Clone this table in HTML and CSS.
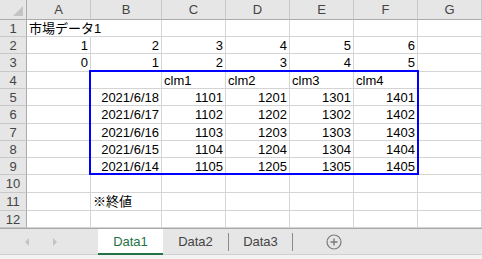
FILE: index.html
```html
<!DOCTYPE html>
<html>
<head>
    <meta charset="UTF-8">
    <title>市場データ</title>
    <link rel="stylesheet" href="styles.css">
</head>
<body>
    <div class="sheet">
        <div class="grid">
            <!-- column headers -->
            <div class="cell head corner"><span class="tri"></span></div>
            <div class="cell head">A</div>
            <div class="cell head">B</div>
            <div class="cell head">C</div>
            <div class="cell head">D</div>
            <div class="cell head">E</div>
            <div class="cell head">F</div>
            <div class="cell head">G</div>

            <!-- row 1 -->
            <div class="cell rowhead">1</div>
            <div class="cell text overflow">市場データ1</div>
            <div class="cell"></div><div class="cell"></div><div class="cell"></div>
            <div class="cell"></div><div class="cell"></div><div class="cell"></div>

            <!-- row 2 -->
            <div class="cell rowhead">2</div>
            <div class="cell num">1</div>
            <div class="cell num">2</div>
            <div class="cell num">3</div>
            <div class="cell num">4</div>
            <div class="cell num">5</div>
            <div class="cell num">6</div>
            <div class="cell"></div>

            <!-- row 3 -->
            <div class="cell rowhead">3</div>
            <div class="cell num">0</div>
            <div class="cell num">1</div>
            <div class="cell num">2</div>
            <div class="cell num">3</div>
            <div class="cell num">4</div>
            <div class="cell num">5</div>
            <div class="cell"></div>

            <!-- row 4 -->
            <div class="cell rowhead">4</div>
            <div class="cell"></div>
            <div class="cell"></div>
            <div class="cell text">clm1</div>
            <div class="cell text">clm2</div>
            <div class="cell text">clm3</div>
            <div class="cell text">clm4</div>
            <div class="cell"></div>

            <!-- row 5 -->
            <div class="cell rowhead">5</div>
            <div class="cell"></div>
            <div class="cell num">2021/6/18</div>
            <div class="cell num">1101</div>
            <div class="cell num">1201</div>
            <div class="cell num">1301</div>
            <div class="cell num">1401</div>
            <div class="cell"></div>

            <!-- row 6 -->
            <div class="cell rowhead">6</div>
            <div class="cell"></div>
            <div class="cell num">2021/6/17</div>
            <div class="cell num">1102</div>
            <div class="cell num">1202</div>
            <div class="cell num">1302</div>
            <div class="cell num">1402</div>
            <div class="cell"></div>

            <!-- row 7 -->
            <div class="cell rowhead">7</div>
            <div class="cell"></div>
            <div class="cell num">2021/6/16</div>
            <div class="cell num">1103</div>
            <div class="cell num">1203</div>
            <div class="cell num">1303</div>
            <div class="cell num">1403</div>
            <div class="cell"></div>

            <!-- row 8 -->
            <div class="cell rowhead">8</div>
            <div class="cell"></div>
            <div class="cell num">2021/6/15</div>
            <div class="cell num">1104</div>
            <div class="cell num">1204</div>
            <div class="cell num">1304</div>
            <div class="cell num">1404</div>
            <div class="cell"></div>

            <!-- row 9 -->
            <div class="cell rowhead">9</div>
            <div class="cell"></div>
            <div class="cell num">2021/6/14</div>
            <div class="cell num">1105</div>
            <div class="cell num">1205</div>
            <div class="cell num">1305</div>
            <div class="cell num">1405</div>
            <div class="cell"></div>

            <!-- row 10 -->
            <div class="cell rowhead">10</div>
            <div class="cell"></div><div class="cell"></div><div class="cell"></div><div class="cell"></div>
            <div class="cell"></div><div class="cell"></div><div class="cell"></div>

            <!-- row 11 -->
            <div class="cell rowhead">11</div>
            <div class="cell"></div>
            <div class="cell text">※終値</div>
            <div class="cell"></div><div class="cell"></div>
            <div class="cell"></div><div class="cell"></div><div class="cell"></div>

            <!-- row 12 -->
            <div class="cell rowhead">12</div>
            <div class="cell"></div><div class="cell"></div><div class="cell"></div><div class="cell"></div>
            <div class="cell"></div><div class="cell"></div><div class="cell"></div>
        </div>

        <!-- blue outline around B4:F9 -->
        <div class="range-box"></div>
    </div>

    <div class="tabbar">
        <div class="nav">
            <span class="arrow left"></span>
            <span class="arrow right"></span>
        </div>
        <div class="tab active">Data1</div>
        <div class="tab">Data2</div>
        <div class="tab last">Data3</div>
        <div class="add">
            <svg width="16" height="16" viewBox="0 0 16 16">
                <circle cx="8" cy="8" r="7" fill="none" stroke="#7b7b7b" stroke-width="1.2"/>
                <path d="M8 4.5v7M4.5 8h7" stroke="#7b7b7b" stroke-width="1.4"/>
            </svg>
        </div>
    </div>
    <div class="statusgap"></div>
</body>
</html>
```

FILE: styles.css
```css
body {
    margin: 0;
    width: 482px;
    height: 259px;
    overflow: hidden;
    background: #fff;
    font-family: "Liberation Sans", "Noto Sans CJK JP", sans-serif;
    font-size: 13px;
    color: #000;
}
.sheet {
    position: relative;
}
.grid {
    display: grid;
    grid-template-columns: 27px 64px 71px 64px 64px 64px 64px 64px;
    grid-template-rows: 20px 17px 17px 18px 17px 17px 18px 17px 17px 17px 18px 18px 17px;
}
.cell {
    box-sizing: border-box;
    border-right: 1px solid #d4d4d4;
    border-bottom: 1px solid #d4d4d4;
    display: flex;
    align-items: center;
    padding: 0 2px;
    white-space: nowrap;
    line-height: 1;
}
.head {
    background: #e6e6e6;
    color: #444;
    justify-content: center;
    border-right-color: #c8c8c8;
    border-bottom-color: #ababab;
}
.corner {
    position: relative;
    border-right-color: #ababab;
}
.tri {
    position: absolute;
    right: 3px;
    bottom: 3px;
    width: 0;
    height: 0;
    border-left: 10px solid transparent;
    border-bottom: 10px solid #c4c4c4;
}
.rowhead {
    background: #e6e6e6;
    color: #444;
    justify-content: center;
    border-right-color: #ababab;
    border-bottom-color: #c8c8c8;
}
.num {
    justify-content: flex-end;
}
.text {
    justify-content: flex-start;
}
.overflow {
    overflow: visible;
    border-right-color: transparent;
}
.range-box {
    position: absolute;
    left: 89px;
    top: 70px;
    width: 330px;
    height: 105px;
    box-sizing: border-box;
    border: 2px solid #0000ff;
    pointer-events: none;
}
.tabbar {
    height: 27px;
    box-sizing: border-box;
    background: #e6e6e6;
    border-top: 1px solid #a8a8a8;
    border-bottom: 1px solid #d0d0d0;
    display: flex;
    align-items: stretch;
}
.nav {
    width: 98px;
    display: flex;
    align-items: center;
    gap: 24px;
    padding-left: 25px;
    box-sizing: border-box;
}
.arrow {
    width: 0;
    height: 0;
    border-top: 4px solid transparent;
    border-bottom: 4px solid transparent;
}
.arrow.left {
    border-right: 4px solid #c4c4c4;
}
.arrow.right {
    border-left: 4px solid #c4c4c4;
}
.tab {
    width: 65px;
    display: flex;
    align-items: center;
    justify-content: center;
    color: #444;
    position: relative;
}
.tab + .tab::before {
    content: "";
    position: absolute;
    left: 0;
    top: 4px;
    bottom: 3px;
    border-left: 1px solid #8a8a8a;
}
.tab.last::after {
    content: "";
    position: absolute;
    right: 0;
    top: 4px;
    bottom: 3px;
    border-left: 1px solid #8a8a8a;
}
.tab.active {
    background: #fff;
    color: #217346;
    border-bottom: 2px solid #217346;
    margin-bottom: -1px;
    padding-top: 1px;
}
.tab.active + .tab::before {
    display: none;
}
.add {
    display: flex;
    align-items: center;
    margin-left: 33px;
}
.statusgap {
    height: 4px;
    background: #f3f3f3;
}
```
